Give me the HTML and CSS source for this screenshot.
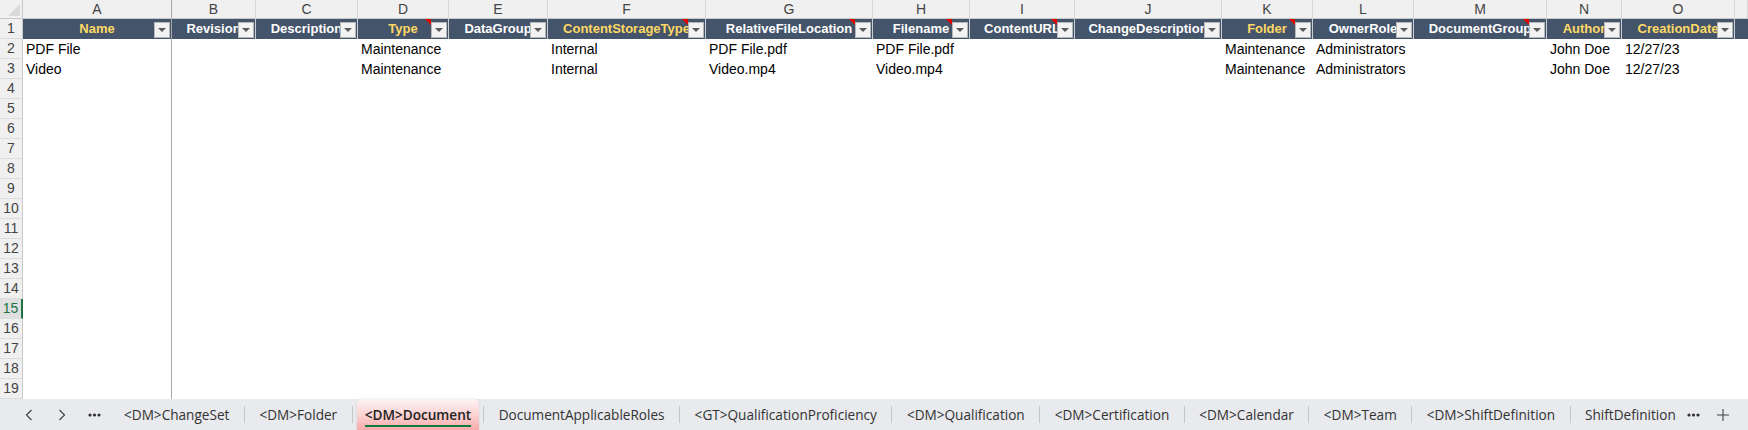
FILE: index.html
```html
<!DOCTYPE html>
<html lang="en">
<head>
    <meta charset="UTF-8">
    <title>DM Document</title>
    <link rel="stylesheet" href="styles.css">
</head>
<body>
    <div class="sheet">
        <div class="row cols">
            <div class="corner"></div>
            <div class="col a">A</div>
            <div class="col">B</div>
            <div class="col">C</div>
            <div class="col">D</div>
            <div class="col">E</div>
            <div class="col">F</div>
            <div class="col">G</div>
            <div class="col">H</div>
            <div class="col">I</div>
            <div class="col">J</div>
            <div class="col">K</div>
            <div class="col">L</div>
            <div class="col">M</div>
            <div class="col">N</div>
            <div class="col">O</div>
            <div class="col"></div>
        </div>
        <div class="row">
            <div class="rh">1</div>
            <div class="hd a gold">Name<span class="flt"></span></div>
            <div class="hd">Revision<span class="flt"></span></div>
            <div class="hd">Description<span class="flt"></span></div>
            <div class="hd gold">Type<span class="note"></span><span class="flt"></span></div>
            <div class="hd">DataGroup<span class="flt"></span></div>
            <div class="hd gold">ContentStorageType<span class="note"></span><span class="flt"></span></div>
            <div class="hd">RelativeFileLocation<span class="note"></span><span class="flt"></span></div>
            <div class="hd">Filename<span class="note"></span><span class="flt"></span></div>
            <div class="hd">ContentURL<span class="note"></span><span class="flt"></span></div>
            <div class="hd">ChangeDescription<span class="flt"></span></div>
            <div class="hd gold">Folder<span class="note"></span><span class="flt"></span></div>
            <div class="hd">OwnerRole<span class="flt"></span></div>
            <div class="hd">DocumentGroup<span class="note"></span><span class="flt"></span></div>
            <div class="hd gold">Author<span class="flt"></span></div>
            <div class="hd gold">CreationDate<span class="flt"></span></div>
            <div class="hd last"></div>
        </div>
        <div class="row">
            <div class="rh">2</div>
            <div class="c a">PDF File</div>
            <div class="c"></div>
            <div class="c"></div>
            <div class="c">Maintenance</div>
            <div class="c"></div>
            <div class="c">Internal</div>
            <div class="c">PDF File.pdf</div>
            <div class="c">PDF File.pdf</div>
            <div class="c"></div>
            <div class="c"></div>
            <div class="c">Maintenance</div>
            <div class="c">Administrators</div>
            <div class="c"></div>
            <div class="c">John Doe</div>
            <div class="c">12/27/23</div>
        </div>
        <div class="row">
            <div class="rh">3</div>
            <div class="c a">Video</div>
            <div class="c"></div>
            <div class="c"></div>
            <div class="c">Maintenance</div>
            <div class="c"></div>
            <div class="c">Internal</div>
            <div class="c">Video.mp4</div>
            <div class="c">Video.mp4</div>
            <div class="c"></div>
            <div class="c"></div>
            <div class="c">Maintenance</div>
            <div class="c">Administrators</div>
            <div class="c"></div>
            <div class="c">John Doe</div>
            <div class="c">12/27/23</div>
        </div>
        <div class="row"><div class="rh">4</div><div class="c a"></div></div>
        <div class="row"><div class="rh">5</div><div class="c a"></div></div>
        <div class="row"><div class="rh">6</div><div class="c a"></div></div>
        <div class="row"><div class="rh">7</div><div class="c a"></div></div>
        <div class="row"><div class="rh">8</div><div class="c a"></div></div>
        <div class="row"><div class="rh">9</div><div class="c a"></div></div>
        <div class="row"><div class="rh">10</div><div class="c a"></div></div>
        <div class="row"><div class="rh">11</div><div class="c a"></div></div>
        <div class="row"><div class="rh">12</div><div class="c a"></div></div>
        <div class="row"><div class="rh">13</div><div class="c a"></div></div>
        <div class="row"><div class="rh">14</div><div class="c a"></div></div>
        <div class="row"><div class="rh sel">15</div><div class="c a"></div></div>
        <div class="row"><div class="rh">16</div><div class="c a"></div></div>
        <div class="row"><div class="rh">17</div><div class="c a"></div></div>
        <div class="row"><div class="rh">18</div><div class="c a"></div></div>
        <div class="row"><div class="rh">19</div><div class="c a"></div></div>
    </div>

    <div class="tabs">
        <div class="nav">
            <span class="nav-btn">
                <svg width="8" height="12" viewBox="0 0 8 12"><path d="M6.5 1 1.5 6l5 5" fill="none" stroke="#444" stroke-width="1.2"/></svg>
            </span>
            <span class="nav-btn">
                <svg width="8" height="12" viewBox="0 0 8 12"><path d="M1.5 1l5 5-5 5" fill="none" stroke="#444" stroke-width="1.2"/></svg>
            </span>
            <span class="nav-btn">
                <svg width="13" height="4" viewBox="0 0 13 4"><circle cx="2" cy="2" r="1.6" fill="#333"/><circle cx="6.5" cy="2" r="1.6" fill="#333"/><circle cx="11" cy="2" r="1.6" fill="#333"/></svg>
            </span>
        </div>
        <span class="tab">&lt;DM&gt;ChangeSet</span>
        <span class="sep"></span>
        <span class="tab">&lt;DM&gt;Folder</span>
        <span class="sep"></span>
        <span class="tab active"><span class="tab-label">&lt;DM&gt;Document</span></span>
        <span class="sep"></span>
        <span class="tab">DocumentApplicableRoles</span>
        <span class="sep"></span>
        <span class="tab">&lt;GT&gt;QualificationProficiency</span>
        <span class="sep"></span>
        <span class="tab">&lt;DM&gt;Qualification</span>
        <span class="sep"></span>
        <span class="tab">&lt;DM&gt;Certification</span>
        <span class="sep"></span>
        <span class="tab">&lt;DM&gt;Calendar</span>
        <span class="sep"></span>
        <span class="tab">&lt;DM&gt;Team</span>
        <span class="sep"></span>
        <span class="tab">&lt;DM&gt;ShiftDefinition</span>
        <span class="sep"></span>
        <span class="tab">ShiftDefinition</span>
        <span class="more">
            <svg width="13" height="4" viewBox="0 0 13 4"><circle cx="2" cy="2" r="1.6" fill="#333"/><circle cx="6.5" cy="2" r="1.6" fill="#333"/><circle cx="11" cy="2" r="1.6" fill="#333"/></svg>
        </span>
        <span class="add">
            <svg width="14" height="14" viewBox="0 0 14 14"><path d="M7 1v12M1 7h12" stroke="#444" stroke-width="1.1"/></svg>
        </span>
    </div>
</body>
</html>
```

FILE: styles.css
```css
*{
    margin: 0;
    padding: 0;
    box-sizing: border-box;
}
body{
    width: 1748px;
    height: 430px;
    overflow: hidden;
    background-color: #fff;
    font-family: "Liberation Sans", Arial, sans-serif;
}
.sheet{
    height: 399px;
    overflow: hidden;
}
.row{
    display: grid;
    grid-template-columns: 23px 149px 84px 102px 91px 99px 158px 167px 97px 105px 147px 91px 101px 133px 75px 113px 1fr;
    height: 20px;
}
.row.cols{
    height: 19px;
}
.corner{
    position: relative;
    background-color: #f0f0f0;
    border-right: 1px solid #c8c8c8;
    border-bottom: 1px solid #c8c8c8;
}
.corner::after{
    content: "";
    position: absolute;
    right: 2px;
    bottom: 2px;
    border-left: 12px solid transparent;
    border-bottom: 12px solid #d9d9d9;
}
.col{
    background-color: #f0f0f0;
    border-right: 1px solid #d6d6d6;
    border-bottom: 1px solid #c8c8c8;
    color: #444;
    font-size: 14px;
    line-height: 18px;
    text-align: center;
}
.col.a{
    border-right-color: #a8a8a8;
}
.rh{
    background-color: #f0f0f0;
    border-right: 1px solid #c8c8c8;
    border-bottom: 1px solid #dcdcdc;
    color: #444;
    font-size: 14px;
    line-height: 19px;
    text-align: center;
}
.rh.sel{
    background-color: #e0e0e0;
    color: #217346;
    border-right: 2px solid #217346;
}
.hd{
    position: relative;
    overflow: hidden;
    white-space: nowrap;
    background-color: #44546a;
    border-right: 1px solid #c9ced6;
    color: #fff;
    font-size: 13px;
    font-weight: bold;
    line-height: 20px;
    text-align: center;
}
.hd.a{
    border-right-color: #a8a8a8;
}
.hd.last{
    border-right: none;
}
.gold{
    color: #ffd966;
}
.flt{
    position: absolute;
    right: 1px;
    top: 3px;
    width: 16px;
    height: 16px;
    border: 1px solid #b8b8b8;
    background-color: #f2f2f2;
}
.flt::after{
    content: "";
    position: absolute;
    left: 3px;
    top: 5px;
    border-left: 4px solid transparent;
    border-right: 4px solid transparent;
    border-top: 4px solid #5a5a5a;
}
.note{
    position: absolute;
    right: 17px;
    top: 0;
    border-left: 6px solid transparent;
    border-top: 6px solid #e60000;
}
.c{
    overflow: hidden;
    white-space: nowrap;
    padding-left: 3px;
    font-size: 14px;
    line-height: 20px;
    color: #000;
}
.c.a{
    border-right: 1px solid #a8a8a8;
}
.tabs{
    display: flex;
    align-items: center;
    height: 31px;
    background-color: #e8eaed;
    color: #333;
    font-family: "Open Sans", "Liberation Sans", sans-serif;
    font-size: 13.6px;
    white-space: nowrap;
}
.nav{
    display: flex;
    align-items: center;
    padding-left: 12px;
}
.nav-btn{
    width: 33px;
    display: flex;
    justify-content: center;
    align-items: center;
}
.tab{
    padding: 0 14.5px;
    line-height: 31px;
}
.tab:first-of-type{
    padding-left: 13px;
}
.sep{
    width: 1px;
    height: 17px;
    background-color: #c4c6ca;
}
.tab.active{
    align-self: stretch;
    margin: 0 4px;
    padding: 0 8px;
    border-radius: 5px 5px 0 0;
    background: linear-gradient(#fdf3f3, #fbd0d0 55%, #f8a9a9);
    box-shadow: 0 0 2px rgba(0,0,0,0.15);
    color: #222;
    font-weight: 600;
}
.tab-label{
    display: inline-block;
    line-height: 20px;
    border-bottom: 2px solid #107c41;
}
.more{
    display: flex;
    margin-left: -3px;
}
.add{
    display: flex;
    margin-left: 16px;
}
```
